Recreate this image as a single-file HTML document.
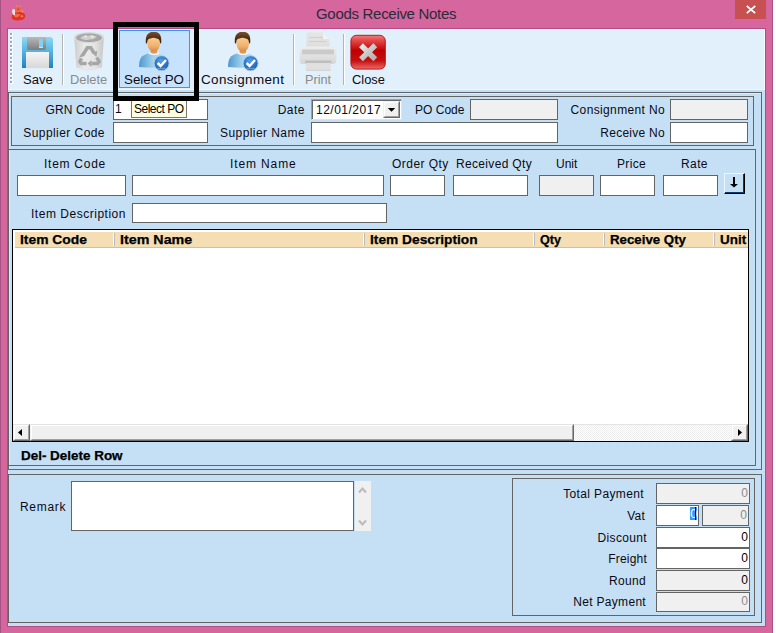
<!DOCTYPE html>
<html><head><meta charset="utf-8">
<style>
*{margin:0;padding:0;box-sizing:border-box}
html,body{width:776px;height:633px;overflow:hidden}
body{position:relative;background:#D5679E;font-family:"Liberation Sans",sans-serif;color:#000}
.a{position:absolute}
.tb{position:absolute;background:#fff;border:1px solid #646464}
.g{background:#F0F0F0}
.l{position:absolute;font-size:12px;line-height:14px;white-space:nowrap;color:#0A0A14}
.r{text-align:right}
.bx{position:absolute;border:1px solid #646464}
.hd{position:absolute;top:233px;font-weight:bold;font-size:12px;line-height:14px;white-space:nowrap;color:#000;-webkit-text-stroke:0.25px #000;transform-origin:0 0}
.sep{position:absolute;top:233px;width:2px;height:13px;border-left:1px solid #fff;border-right:1px solid #B8BCC8}
.tl{position:absolute;top:73px;font-size:12px;line-height:14px;white-space:nowrap;color:#0A0A14;transform-origin:0 0}
.ts{position:absolute;top:34px;width:2px;height:51px;border-left:1px solid #B4B4B4;border-right:1px solid #fff}
.dot{position:absolute;left:10px;width:3px;height:3px;border-right:1px solid #fff;border-bottom:1px solid #fff}
.dot:before{content:"";position:absolute;left:0;top:0;width:2px;height:2px;background:#A7A7A7}
.num{position:absolute;font-size:12px;line-height:14px;text-align:right}
</style></head><body>
<!-- window frame -->
<div class="a" style="left:0;top:0;width:1px;height:633px;background:#A65283"></div>
<div class="a" style="left:772px;top:0;width:1px;height:633px;background:#A65283"></div>
<div class="a" style="left:773px;top:0;width:3px;height:633px;background:#fff"></div>
<!-- title icon -->
<svg class="a" style="left:8px;top:2px" width="20" height="20" viewBox="0 0 20 20">
<path d="M4 13.5 Q4.5 10.5 9.5 10.2 Q15 9.5 16.8 12.2 Q18.2 16 14.5 17.8 Q8.5 19.2 4.8 17.6 Q3.2 16 4 13.5 Z" fill="#E5301A"/>
<path d="M6 12.5 Q9.5 11 12.5 12.5 Q11 15.5 7.5 15.5 Q5.5 14.5 6 12.5 Z" fill="#F07A5C" opacity="0.8"/>
<path d="M13 13 Q15 12.5 15.5 14.5 Q14 16 12.5 15 Z" fill="#F29080" opacity="0.8"/>
<path d="M4.2 7.5 Q6.5 6 7.2 8.5 L7 13.2 Q4.6 13.6 4.2 10.5 Z" fill="#E9E2E2"/>
<path d="M7 9.8 Q7 5.2 10 4.5 L12.2 4.5 Q13.3 6.5 12.8 9.5 Q10 11 7 9.8 Z" fill="#EC6848"/>
<path d="M7.5 4.8 L8.8 2.8 L10.2 4.8 Z M11.2 4 L12.5 2.2 L13 4.8 Z" fill="#EE8868"/>
<path d="M12.5 8.5 L15.5 8.2 L14.8 11 Z" fill="#EE8A6A"/>
<path d="M9 7 Q10.5 6 11.5 7 Q10.5 8.5 9 7 Z" fill="#C82818"/>
</svg>
<!-- title -->
<div class="a" style="left:316px;top:5px;font-size:15px;line-height:18px;color:#2B2B3A;white-space:nowrap;letter-spacing:-0.3px">Goods Receive Notes</div>
<div class="a" style="left:735px;top:0;width:31px;height:19px;background:#C75050"></div>
<svg class="a" style="left:735px;top:0" width="31" height="19"><path d="M11.8 6 L20.2 13.2 M20.2 6 L11.8 13.2" stroke="#fff" stroke-width="1.7"/></svg>
<!-- client -->
<div class="a" style="left:7px;top:28px;width:759px;height:599px;background:#B24C82"></div>
<div class="a" style="left:8px;top:29px;width:757px;height:597px;background:#C5E0F4"></div>
<!-- toolbar -->
<div class="a" style="left:8px;top:29px;width:757px;height:61px;background:#E1F0FB;border-bottom:1px solid #F2F6F8;border-right:1px solid #F6FBFE;border-top:1px solid #EAF6FD"></div>
<div class="dot" style="top:33px"></div><div class="dot" style="top:37px"></div><div class="dot" style="top:41px"></div>
<div class="dot" style="top:45px"></div><div class="dot" style="top:49px"></div><div class="dot" style="top:53px"></div>
<div class="dot" style="top:57px"></div><div class="dot" style="top:61px"></div><div class="dot" style="top:65px"></div>
<div class="dot" style="top:69px"></div><div class="dot" style="top:73px"></div><div class="dot" style="top:77px"></div>
<div class="dot" style="top:81px"></div>
<div class="ts" style="left:62px"></div>
<div class="ts" style="left:293px"></div>
<div class="ts" style="left:343px"></div>
<!-- highlighted button -->
<div class="a" style="left:119px;top:30px;width:71px;height:58px;background:#C6E2FD;border:1px solid #3399FF"></div>

<!-- save icon -->
<svg class="a" style="left:20px;top:35px" width="36" height="36" viewBox="20 35 36 36">
<defs>
<linearGradient id="sb" x1="0" y1="0" x2="0" y2="1"><stop offset="0" stop-color="#8BDAF6"/><stop offset="1" stop-color="#1B84C4"/></linearGradient>
<linearGradient id="sg" x1="0" y1="0" x2="0" y2="1"><stop offset="0" stop-color="#B9B9B9"/><stop offset="1" stop-color="#7D7D7D"/></linearGradient>
<linearGradient id="sl" x1="0" y1="0" x2="0" y2="1"><stop offset="0" stop-color="#F5F5F5"/><stop offset="1" stop-color="#D8D8D8"/></linearGradient>
</defs>
<path d="M22 37 H51 L53 39 V68 H22 Z" fill="url(#sb)"/>
<path d="M27 37 H46 V48 Q46 50 44 50 H29 Q27 50 27 48 Z" fill="url(#sg)"/>
<rect x="39" y="39" width="4" height="9" fill="#80D0F0"/>
<rect x="39" y="47" width="4" height="1" fill="#E0E0E0"/>
<rect x="26" y="52" width="23" height="16" fill="url(#sl)"/>
</svg>
<!-- delete icon -->
<svg class="a" style="left:72px;top:30px" width="36" height="44" viewBox="72 30 36 44">
<defs>
<linearGradient id="db" x1="0" y1="0" x2="1" y2="0"><stop offset="0" stop-color="#CDCDCD"/><stop offset="0.35" stop-color="#EAEAEA"/><stop offset="0.7" stop-color="#E4E4E4"/><stop offset="1" stop-color="#C6C6C6"/></linearGradient>
<radialGradient id="dsh" cx="0.5" cy="0.5" r="0.5"><stop offset="0" stop-color="#C9D6DF"/><stop offset="1" stop-color="#E1F0FB" stop-opacity="0"/></radialGradient>
</defs>
<ellipse cx="89" cy="68.5" rx="15" ry="3" fill="url(#dsh)"/>
<path d="M74.3 38 L103.8 38 L101.8 67.5 Q89 71 76.3 67.5 Z" fill="url(#db)"/>
<ellipse cx="89" cy="37.5" rx="14.8" ry="5.6" fill="#D8D8D8"/>
<ellipse cx="89" cy="37.8" rx="13" ry="4.3" fill="#A6A6A6"/>
<path d="M80 38 Q84 34 88 36 Q92 33.5 97 37 Q93 40 89 39.5 Q84 41 80 38 Z" fill="#CFCFCF"/>
<path d="M84 36.5 L87 35 L86 38 Z M91 35.5 L94 36.5 L92 38.5 Z" fill="#EDEDED"/>
<g fill="none" stroke="#A6A6A6" stroke-width="3.5">
<path d="M83.2 54.5 L87.3 47.8 L90.8 47.8 L94 53"/>
<path d="M96.8 57.5 L99 61.5 L97.5 63.5 L91.5 63.5"/>
<path d="M86.5 63.5 L81 63.5 L79.8 61.5 L81.5 58.5"/>
</g>
<path d="M91.5 52.5 L97.2 51 L96.5 57 Z M91.5 60 L91.5 67 L87.5 63.5 Z M79 57.5 L84.8 56 L82.5 52 Z" fill="#A6A6A6"/>
</svg>
<!-- person icons -->
<svg class="a" style="left:139px;top:32px" width="32" height="40" viewBox="0 0 32 40">
<defs>
<linearGradient id="ph" x1="0" y1="0" x2="0" y2="1"><stop offset="0" stop-color="#7A5030"/><stop offset="0.5" stop-color="#52300F"/><stop offset="1" stop-color="#2E1A0A"/></linearGradient>
<linearGradient id="pf" x1="0" y1="0" x2="0" y2="1"><stop offset="0" stop-color="#FAD39E"/><stop offset="0.7" stop-color="#F0AE68"/><stop offset="1" stop-color="#D88A48"/></linearGradient>
<linearGradient id="pn" x1="0" y1="0" x2="0" y2="1"><stop offset="0" stop-color="#B8703A"/><stop offset="1" stop-color="#E8A060"/></linearGradient>
<linearGradient id="pb" x1="0" y1="0" x2="1" y2="0"><stop offset="0" stop-color="#4F98D0"/><stop offset="0.45" stop-color="#9CD0EA"/><stop offset="1" stop-color="#D6F0F8"/></linearGradient>
<radialGradient id="pc" cx="0.45" cy="0.35" r="0.65"><stop offset="0" stop-color="#5AA0E6"/><stop offset="0.7" stop-color="#2A6EC4"/><stop offset="1" stop-color="#2060B0"/></radialGradient>
</defs>
<path d="M0 35 C0 27 2.5 23.2 9 21.6 L20.5 21.6 C27 23.2 29.6 27 29.6 35 Q15 36.5 0 35 Z" fill="url(#pb)"/>
<path d="M9.5 21.8 Q15 24.2 20.5 21.8 L19.2 20.3 Q15 22 10.8 20.3 Z" fill="#F6F8F8"/>
<path d="M11.5 13 L18.2 13 L18 21 Q15 22.3 11.7 21 Z" fill="url(#pn)"/>
<path d="M8.3 10 Q8.6 17 12 18.6 Q14.8 19.8 17.6 18.6 Q21 17 21.1 10 Q21 4 14.8 4 Q8.4 4 8.3 10 Z" fill="url(#pf)"/>
<path d="M7 12 C5.8 3 9.5 -0.2 14.6 -0.2 C19.8 -0.2 23.4 3 22 12 L21 10.5 C20.8 7.5 19.5 6.8 17.5 6.5 Q14.6 5.2 11.5 6.5 C9.5 6.8 8.4 7.5 8.2 10.5 Z" fill="url(#ph)"/>
<circle cx="22.6" cy="31.2" r="7.5" fill="url(#pc)" stroke="#A8CDEB" stroke-width="0.9"/>
<path d="M18.6 31 L21.6 34 L27 28" fill="none" stroke="#fff" stroke-width="2.5"/>
<path d="M18.5 36.2 Q22.6 37.5 26.7 36.2" fill="none" stroke="#7FB0DE" stroke-width="0.8"/>
</svg>
<svg class="a" style="left:228px;top:32px" width="32" height="40" viewBox="0 0 32 40">
<path d="M0 35 C0 27 2.5 23.2 9 21.6 L20.5 21.6 C27 23.2 29.6 27 29.6 35 Q15 36.5 0 35 Z" fill="url(#pb)"/>
<path d="M9.5 21.8 Q15 24.2 20.5 21.8 L19.2 20.3 Q15 22 10.8 20.3 Z" fill="#F6F8F8"/>
<path d="M11.5 13 L18.2 13 L18 21 Q15 22.3 11.7 21 Z" fill="url(#pn)"/>
<path d="M8.3 10 Q8.6 17 12 18.6 Q14.8 19.8 17.6 18.6 Q21 17 21.1 10 Q21 4 14.8 4 Q8.4 4 8.3 10 Z" fill="url(#pf)"/>
<path d="M7 12 C5.8 3 9.5 -0.2 14.6 -0.2 C19.8 -0.2 23.4 3 22 12 L21 10.5 C20.8 7.5 19.5 6.8 17.5 6.5 Q14.6 5.2 11.5 6.5 C9.5 6.8 8.4 7.5 8.2 10.5 Z" fill="url(#ph)"/>
<circle cx="22.6" cy="31.2" r="7.5" fill="url(#pc)" stroke="#A8CDEB" stroke-width="0.9"/>
<path d="M18.6 31 L21.6 34 L27 28" fill="none" stroke="#fff" stroke-width="2.5"/>
<path d="M18.5 36.2 Q22.6 37.5 26.7 36.2" fill="none" stroke="#7FB0DE" stroke-width="0.8"/>
</svg>
<!-- print icon -->
<svg class="a" style="left:297px;top:30px" width="42" height="44" viewBox="297 30 42 44">
<defs>
<linearGradient id="pr" x1="0" y1="0" x2="0" y2="1"><stop offset="0" stop-color="#EDEDED"/><stop offset="1" stop-color="#D6D6D6"/></linearGradient>
<linearGradient id="pp" x1="0" y1="0" x2="0" y2="1"><stop offset="0" stop-color="#E6E6E6"/><stop offset="1" stop-color="#DCDCDC"/></linearGradient>
</defs>
<path d="M306.5 32.3 H323 L329.4 39 V50 H306.5 Z" fill="url(#pp)"/>
<path d="M323 32.3 V39 H329.4 Z" fill="#F2F2F2"/>
<rect x="309" y="37" width="14" height="1" fill="#D0D0D0"/>
<rect x="309" y="41" width="17" height="1" fill="#D0D0D0"/>
<rect x="299.7" y="46.6" width="36.5" height="17.5" rx="3.5" fill="url(#pr)"/>
<rect x="302" y="49.6" width="32" height="5" rx="1" fill="#CACACA"/>
<rect x="302" y="54.6" width="32" height="1" fill="#E2E2E2"/>
<rect x="305" y="60.5" width="26.5" height="3" fill="#BEBEBE"/>
<rect x="305.9" y="63" width="24.7" height="7.7" fill="#E0E0E0"/>
<rect x="305.9" y="69.8" width="24.7" height="0.9" fill="#CFCFCF"/>
</svg>
<!-- close icon -->
<svg class="a" style="left:348px;top:33px" width="40" height="40" viewBox="348 33 40 40">
<defs>
<linearGradient id="cr" x1="0" y1="0" x2="0" y2="1"><stop offset="0" stop-color="#F08080"/><stop offset="0.12" stop-color="#E85050"/><stop offset="0.45" stop-color="#C00000"/><stop offset="0.75" stop-color="#C41010"/><stop offset="1" stop-color="#EE6A6A"/></linearGradient>
<linearGradient id="cx" x1="0" y1="0" x2="1" y2="1"><stop offset="0" stop-color="#EEEEEE"/><stop offset="0.5" stop-color="#C8C8C8"/><stop offset="1" stop-color="#B0B0B0"/></linearGradient>
</defs>
<rect x="350.9" y="35.3" width="34.4" height="33.8" rx="5.5" fill="url(#cr)" stroke="#A81010" stroke-width="0.9"/>
<path d="M361 45.3 L375.3 59.3 M375.3 45.3 L361 59.3" stroke="url(#cx)" stroke-width="5.4"/>
</svg>
<!-- toolbar labels -->
<div class="tl" style="left:23px;transform:scaleX(1.085)">Save</div>
<div class="tl" style="left:70px;color:#8A8A8A;transform:scaleX(1.07)">Delete</div>
<div class="tl" style="left:124px;transform:scaleX(1.11)">Select PO</div>
<div class="tl" style="left:201px;transform:scaleX(1.12);letter-spacing:0.33px">Consignment</div>
<div class="tl" style="left:305px;color:#8A8A8A;transform:scaleX(1.06)">Print</div>
<div class="tl" style="left:351.5px;transform:scaleX(1.07)">Close</div>

<!-- container 1 -->
<div class="bx" style="left:8px;top:92px;width:754px;height:378px;border-right-color:#646464"></div>
<div class="a" style="left:9px;top:93px;width:752px;height:376px;border:1px solid #D6EBFB;border-right:0;border-bottom:0"></div>
<div class="bx" style="left:11px;top:96px;width:743px;height:50px"></div>
<div class="bx" style="left:8px;top:149px;width:748px;height:317px"></div>
<!-- container 2 -->
<div class="bx" style="left:8px;top:474px;width:754px;height:149px"></div>
<div class="bx" style="left:512px;top:478px;width:243px;height:138px"></div>

<!-- header row -->
<div class="l r" style="right:671px;top:103px;letter-spacing:0.1px">GRN Code</div>
<div class="l r" style="right:671px;top:126px;letter-spacing:0.44px">Supplier Code</div>
<div class="tb" style="left:113px;top:99px;width:95px;height:21px"></div>
<div class="l" style="left:115px;top:102px">1</div>
<div class="tb" style="left:113px;top:122px;width:95px;height:21px"></div>
<div class="l r" style="right:471px;top:103px;letter-spacing:0.5px">Date</div>
<div class="l r" style="right:471px;top:126px;letter-spacing:0.43px">Supplier Name</div>
<!-- date picker -->
<div class="a" style="left:311px;top:99px;width:91px;height:21px;background:#fff;border-top:1px solid #A0A0A0;border-left:1px solid #A0A0A0;border-right:1px solid #E3E3E3;border-bottom:1px solid #E3E3E3"></div>
<div class="a" style="left:312px;top:100px;width:89px;height:19px;border-top:1px solid #696969;border-left:1px solid #696969"></div>
<div class="l" style="left:316px;top:103px;letter-spacing:0.5px">12/01/2017</div>
<div class="a" style="left:383px;top:101px;width:17px;height:17px;background:#F0F0F0;border-top:1px solid #F0F0F0;border-left:1px solid #F0F0F0;border-right:1px solid #696969;border-bottom:1px solid #696969"></div>
<div class="a" style="left:384px;top:102px;width:15px;height:15px;border-top:1px solid #fff;border-left:1px solid #fff;border-right:1px solid #A0A0A0;border-bottom:1px solid #A0A0A0"></div>
<svg class="a" style="left:383px;top:101px" width="17" height="17"><path d="M4.8 7 L12.2 7 L8.5 10.8 Z" fill="#000"/></svg>
<div class="tb" style="left:311px;top:122px;width:247px;height:21px"></div>
<div class="l" style="left:415px;top:103px;letter-spacing:0.02px">PO Code</div>
<div class="tb g" style="left:470px;top:99px;width:88px;height:21px"></div>
<div class="l r" style="right:111px;top:103px;letter-spacing:0.36px">Consignment No</div>
<div class="l r" style="right:111px;top:126px;letter-spacing:0.27px">Receive No</div>
<div class="tb g" style="left:670px;top:99px;width:78px;height:21px"></div>
<div class="tb" style="left:670px;top:122px;width:78px;height:21px"></div>
<!-- tooltip -->
<div class="a" style="left:131px;top:100px;width:56px;height:18px;background:#FFFFE1;border:1px solid #767676"></div>
<div class="a" style="left:134px;top:102px;font-size:12px;line-height:14px;white-space:nowrap;letter-spacing:-0.5px;color:#000">Select PO</div>

<!-- item labels -->
<div class="l" style="left:44px;top:157px;letter-spacing:0.74px">Item Code</div>
<div class="l" style="left:230px;top:157px;letter-spacing:0.88px">Item Name</div>
<div class="l" style="left:392px;top:157px;letter-spacing:0.46px">Order Qty</div>
<div class="l" style="left:456px;top:157px;letter-spacing:0.33px">Received Qty</div>
<div class="l" style="left:556px;top:157px;letter-spacing:0px">Unit</div>
<div class="l" style="left:617px;top:157px;letter-spacing:0.35px">Price</div>
<div class="l" style="left:681px;top:157px;letter-spacing:0.4px">Rate</div>
<div class="tb" style="left:17px;top:175px;width:109px;height:21px"></div>
<div class="tb" style="left:132px;top:175px;width:252px;height:21px"></div>
<div class="tb" style="left:390px;top:175px;width:55px;height:21px"></div>
<div class="tb" style="left:453px;top:175px;width:75px;height:21px"></div>
<div class="tb g" style="left:539px;top:175px;width:55px;height:21px"></div>
<div class="tb" style="left:600px;top:175px;width:55px;height:21px"></div>
<div class="tb" style="left:663px;top:175px;width:55px;height:21px"></div>
<!-- down button -->
<div class="a" style="left:724px;top:173px;width:21px;height:21px;background:#C5E0F4;border-top:1px solid #EEF6FD;border-left:1px solid #EEF6FD;border-right:1px solid #000;border-bottom:1px solid #000"></div>
<div class="a" style="left:743px;top:174px;width:1px;height:19px;background:#0A3A6A"></div>
<div class="a" style="left:725px;top:192px;width:19px;height:1px;background:#0A3A6A"></div>
<svg class="a" style="left:724px;top:173px" width="21" height="21"><path d="M10 4 V12.5" stroke="#000" stroke-width="2"/><path d="M6 11 L14 11 L10 14.5 Z" fill="#000"/></svg>
<div class="l r" style="right:650px;top:207px;letter-spacing:0.52px">Item Description</div>
<div class="tb" style="left:132px;top:203px;width:255px;height:20px"></div>

<!-- grid -->
<div class="a" style="left:12px;top:229px;width:737px;height:213px;background:#fff;border:1px solid #000"></div>
<div class="a" style="left:15px;top:232px;width:733px;height:16px;background:#F5DEB3;border-bottom:1px solid #C8C0B0"></div>
<div class="sep" style="left:113px"></div>
<div class="sep" style="left:363px"></div>
<div class="sep" style="left:533px"></div>
<div class="sep" style="left:603px"></div>
<div class="sep" style="left:713px"></div>
<div class="hd" style="left:20px;transform:scaleX(1.155)">Item Code</div>
<div class="hd" style="left:120px;transform:scaleX(1.19)">Item Name</div>
<div class="hd" style="left:370px;transform:scaleX(1.145)">Item Description</div>
<div class="hd" style="left:540px;transform:scaleX(1.05)">Qty</div>
<div class="hd" style="left:610px;transform:scaleX(1.105)">Receive Qty</div>
<div class="hd" style="left:720px;transform:scaleX(1.12)">Unit</div>
<!-- h scrollbar -->
<div class="a" style="left:13px;top:424px;width:735px;height:17px;background:repeating-conic-gradient(#FFFFFF 0 25%,#EDEDED 0 50%) 0 0/2px 2px;border-top:1px solid #E3E3E3"></div>
<div class="a" style="left:13px;top:424px;width:17px;height:17px;background:#F0F0F0;border-top:1px solid #E3E3E3;border-left:1px solid #F0F0F0;border-right:1px solid #696969;border-bottom:1px solid #696969"></div>
<div class="a" style="left:14px;top:425px;width:15px;height:15px;border-top:1px solid #fff;border-left:1px solid #fff;border-right:1px solid #A0A0A0;border-bottom:1px solid #A0A0A0"></div>
<svg class="a" style="left:13px;top:424px" width="17" height="17"><path d="M5 8.5 L9 5 L9 12 Z" fill="#000"/></svg>
<div class="a" style="left:30px;top:424px;width:544px;height:17px;background:#F0F0F0;border-top:1px solid #E3E3E3;border-left:1px solid #F0F0F0;border-right:1px solid #696969;border-bottom:1px solid #696969"></div>
<div class="a" style="left:31px;top:425px;width:542px;height:15px;border-top:1px solid #fff;border-left:1px solid #fff;border-right:1px solid #A0A0A0;border-bottom:1px solid #A0A0A0"></div>
<div class="a" style="left:731px;top:424px;width:17px;height:17px;background:#F0F0F0;border-top:1px solid #E3E3E3;border-left:1px solid #F0F0F0;border-right:1px solid #696969;border-bottom:1px solid #696969"></div>
<div class="a" style="left:732px;top:425px;width:15px;height:15px;border-top:1px solid #fff;border-left:1px solid #fff;border-right:1px solid #A0A0A0;border-bottom:1px solid #A0A0A0"></div>
<svg class="a" style="left:731px;top:424px" width="17" height="17"><path d="M11 8.5 L7 5 L7 12 Z" fill="#000"/></svg>
<div class="hd" style="left:21px;top:449px;transform:scaleX(1.12)">Del- Delete Row</div>

<!-- bottom -->
<div class="l" style="left:20px;top:500px;letter-spacing:0.7px">Remark</div>
<div class="tb" style="left:71px;top:481px;width:283px;height:50px"></div>
<div class="a" style="left:355px;top:481px;width:16px;height:50px;background:#F0F0F0"></div>
<svg class="a" style="left:355px;top:481px" width="16" height="50"><path d="M4 11.5 L7.5 7.5 L11 11.5 M4 39.5 L7.5 43.5 L11 39.5" fill="none" stroke="#BBBBBB" stroke-width="2.1"/></svg>
<div class="l r" style="right:132px;top:487px;letter-spacing:0.37px">Total Payment</div>
<div class="l r" style="right:131px;top:509px;letter-spacing:0.25px">Vat</div>
<div class="l r" style="right:129px;top:531px;letter-spacing:0.34px">Discount</div>
<div class="l r" style="right:129px;top:552px;letter-spacing:0.2px">Freight</div>
<div class="l r" style="right:130px;top:574px;letter-spacing:0.35px">Round</div>
<div class="l r" style="right:130px;top:595px;letter-spacing:0.3px">Net Payment</div>
<div class="tb g" style="left:656px;top:483px;width:94px;height:21px"></div>
<div class="tb" style="left:656px;top:505px;width:43px;height:21px"></div>
<div class="tb g" style="left:702px;top:505px;width:47px;height:21px"></div>
<div class="tb" style="left:656px;top:527px;width:94px;height:21px"></div>
<div class="tb" style="left:656px;top:548px;width:94px;height:21px"></div>
<div class="tb g" style="left:656px;top:570px;width:94px;height:21px"></div>
<div class="tb g" style="left:656px;top:592px;width:94px;height:20px"></div>
<div class="num" style="left:700px;top:486px;width:48px;color:#8C8C8C">0</div>
<div class="a" style="left:690px;top:507px;width:7px;height:13px;background:#3399FF"></div>
<div class="num" style="left:680px;top:507px;width:17px;color:#fff">0</div>
<div class="a" style="left:695px;top:507px;width:1px;height:13px;background:#000"></div>
<div class="num" style="left:700px;top:508px;width:47px;color:#8C8C8C">0</div>
<div class="num" style="left:700px;top:530px;width:48px">0</div>
<div class="num" style="left:700px;top:551px;width:48px">0</div>
<div class="num" style="left:700px;top:573px;width:48px">0</div>
<div class="num" style="left:700px;top:594px;width:48px;color:#8C8C8C">0</div>
<!-- black highlight rectangle -->
<div class="a" style="left:113px;top:22px;width:86px;height:79px;border:5px solid #000"></div>
</body></html>
